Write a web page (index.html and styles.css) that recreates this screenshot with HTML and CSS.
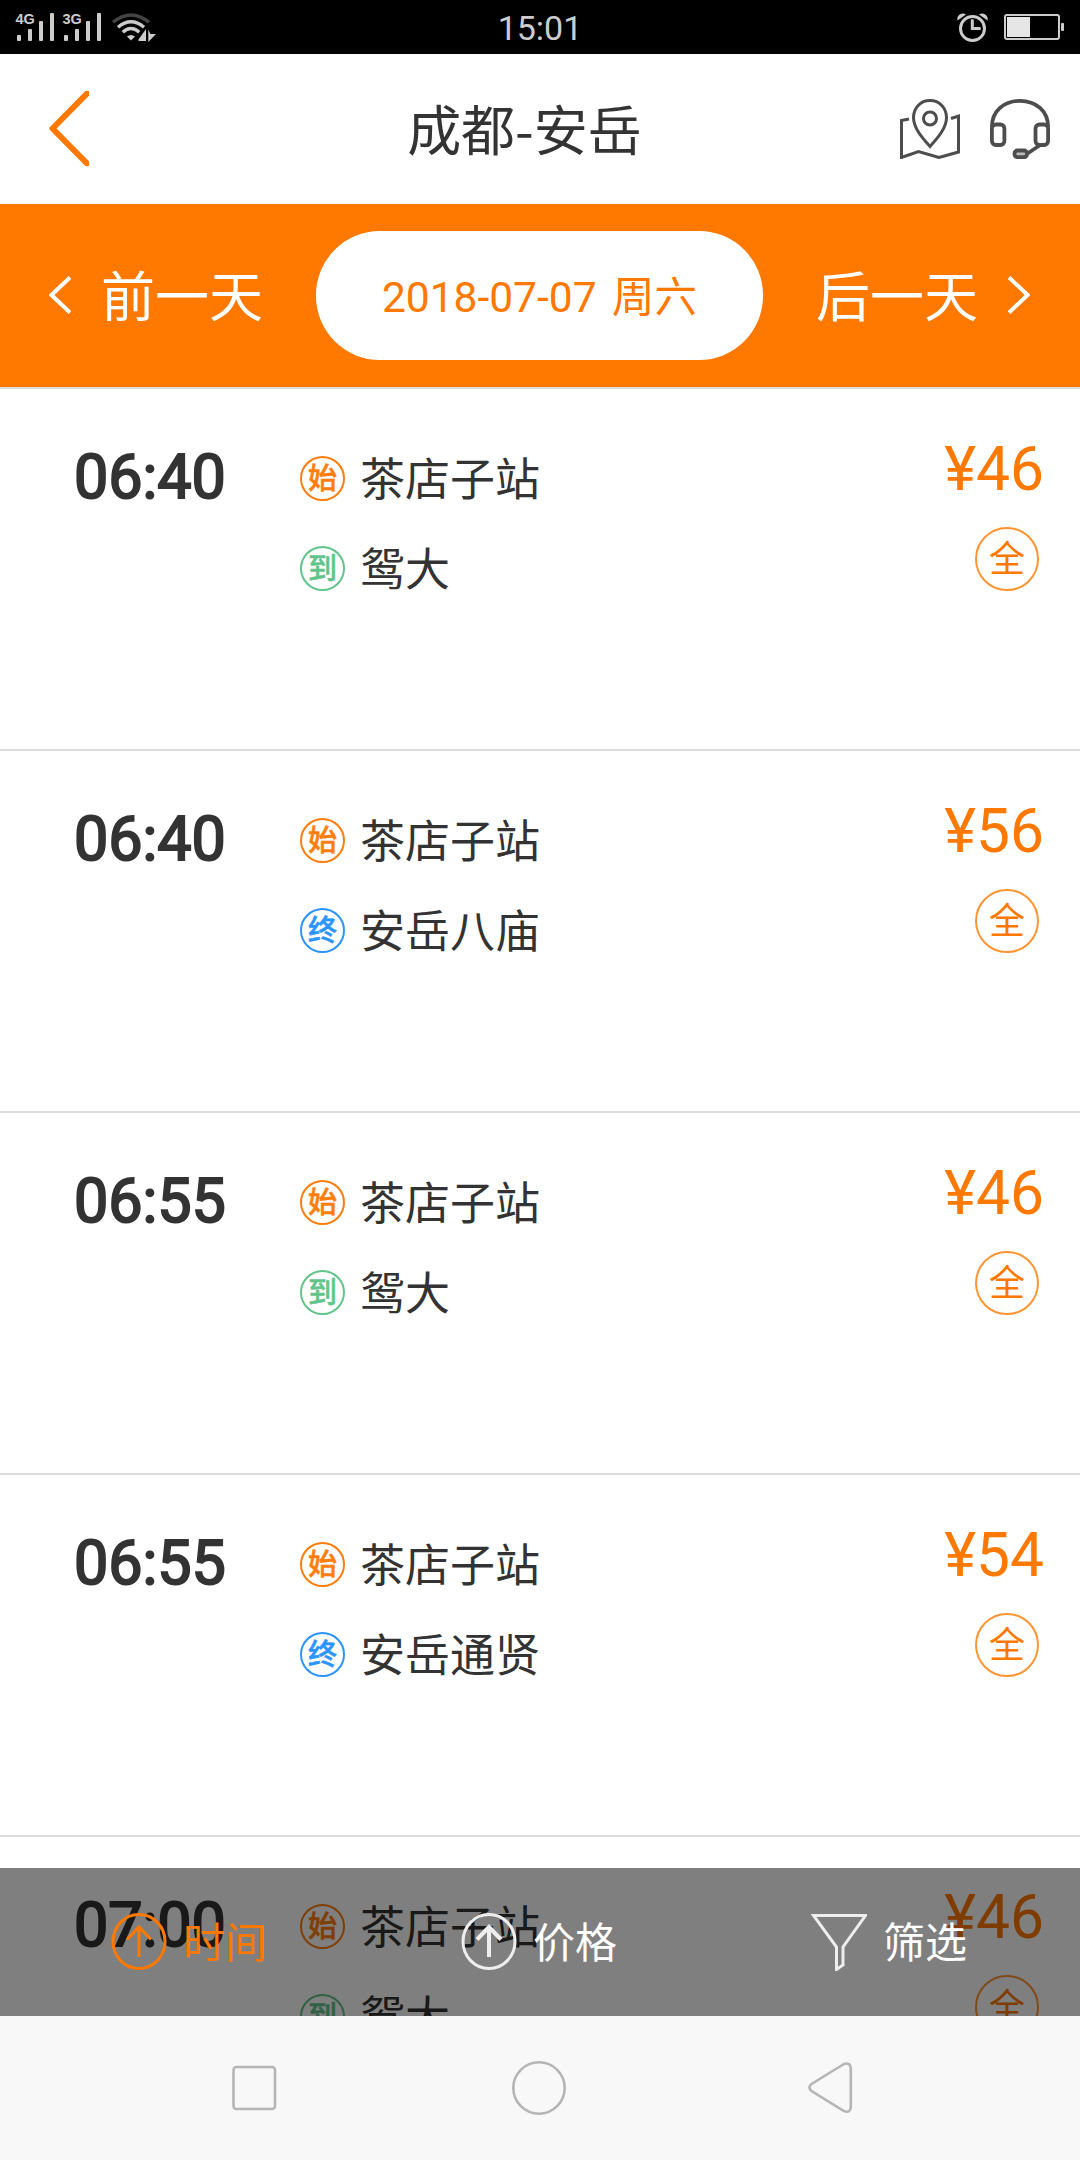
FILE: index.html
```html
<!DOCTYPE html>
<html lang="zh-CN">
<head>
    <meta charset="UTF-8">
    <meta name="viewport" content="width=device-width, initial-scale=1.0">
    <title>成都-安岳</title>
    <link rel="stylesheet" href="styles.css">
</head>
<body>
    <div class="status-bar">
        <svg class="signal" width="156" height="54" viewBox="0 0 156 54">
            <g fill="#ccc">
                <text x="15.5" y="24" class="net">4G</text>
                <rect x="17" y="35" width="4" height="6" rx="1"/>
                <rect x="28" y="29" width="4" height="12" rx="1"/>
                <rect x="39" y="21" width="4" height="20" rx="1"/>
                <rect x="50" y="13" width="4" height="28" rx="1"/>
                <text x="62.5" y="24" class="net">3G</text>
                <rect x="64" y="35" width="4" height="6" rx="1"/>
                <rect x="75" y="29" width="4" height="12" rx="1"/>
                <rect x="86" y="21" width="4" height="20" rx="1"/>
                <rect x="97" y="13" width="4" height="28" rx="1"/>
                <path d="M131 40.500L127 36.500Q131 33.500 135 36.500Z"/>
                <path d="M146 29V41H138.500V39.500ZM148.300 29.500L150.500 34H156L148.300 42Z"/>
            </g>
            <g fill="none" stroke-width="3.400">
                <path stroke="#444" d="M113 22.300Q131 7.500 149 22.300"/>
                <path stroke="#ccc" d="M118 27.300Q131 16.300 144 27.300"/>
                <path stroke="#ccc" d="M122.800 32.200Q131 25 139.200 32.200"/>
            </g>
        </svg>
        <span class="clock">15:01</span>
        <svg class="power" width="124" height="54" viewBox="956 0 124 54">
            <g fill="none" stroke="#ccc" stroke-width="3">
                <circle cx="972.500" cy="28.500" r="12"/>
                <path d="M972.300 20.500V28.500H979.500" stroke-linecap="round"/>
                <rect x="1005" y="15" width="54" height="24" rx="2" stroke-width="2"/>
            </g>
            <path fill="#ccc" d="M957.500 20.500A5.600 5.600 0 0 1 966 14.500ZM979 14.500A5.600 5.600 0 0 1 987.500 20.500Z"/>
            <rect x="1007" y="17" width="23" height="20" fill="#e6e6e6"/>
            <rect x="1061" y="23" width="3" height="8" rx="1" fill="#ccc"/>
        </svg>
    </div>

    <div class="header">
        <svg class="back" width="40" height="75" viewBox="0 0 40 75">
            <path d="M38 2.500L3.500 37.500L38 72.500" fill="none" stroke="#ff7800" stroke-width="6" stroke-linejoin="round" stroke-linecap="round"/>
        </svg>
        <h1>成都-安岳</h1>
        <div class="tools">
            <svg width="60" height="60" viewBox="0 0 60 60" fill="none" stroke="#4d4d4d" stroke-width="3">
                <path d="M30 1.500C20.500 1.500 13.500 9 13.500 18.500C13.500 29 22 38.500 30 47.500C38 38.500 46.500 29 46.500 18.500C46.500 9 39.500 1.500 30 1.500Z"/>
                <circle cx="30" cy="19.500" r="6.500"/>
                <path d="M9 20L1.500 21.500V58.500L18.500 52.500L39 58.500L58.500 53V17L51 19.500"/>
            </svg>
            <svg width="60" height="60" viewBox="0 0 60 60" fill="none" stroke="#4d4d4d" stroke-width="3.800">
                <path d="M1.900 28C1.900 12 14 1.900 30 1.900S58.100 12 58.100 28"/>
                <rect x="1.900" y="25.500" width="12.500" height="20.500" rx="4"/>
                <rect x="45.500" y="25.500" width="12.600" height="20.500" rx="4"/>
                <path d="M49.500 46.500L37.500 54.500"/>
                <rect x="24.500" y="51.500" width="12.500" height="6.700" rx="3" fill="#bbb"/>
            </svg>
        </div>
    </div>

    <div class="date-bar">
        <div class="day">
            <svg width="22" height="38" viewBox="0 0 22 38">
                <path d="M21 1.500L2.500 19L21 36.500" fill="none" stroke="#fff" stroke-width="4"/>
            </svg>
            <span>前一天</span>
        </div>
        <div class="date">2018-07-07 周六</div>
        <div class="day">
            <span>后一天</span>
            <svg width="22" height="38" viewBox="0 0 22 38">
                <path d="M1 1.500L19.500 19L1 36.500" fill="none" stroke="#fff" stroke-width="4"/>
            </svg>
        </div>
    </div>

    <div class="main">
        <div class="list" id="list">
            <!-- 班次列表 -->
        </div>
        <div class="filter-bar">
            <div class="filter active">
                <svg width="56" height="58" viewBox="0 0 56 58" fill="none" stroke="currentColor" stroke-width="3">
                    <ellipse cx="28" cy="28.500" rx="26" ry="27"/>
                    <path d="M28 44V14M16 26.500L28 14L40 26.500"/>
                </svg>
                <span>时间</span>
            </div>
            <div class="filter">
                <svg width="56" height="58" viewBox="0 0 56 58" fill="none" stroke="#eee" stroke-width="3">
                    <ellipse cx="28" cy="28.500" rx="26" ry="27"/>
                    <path d="M28 44V14M16 26.500L28 14L40 26.500" stroke-width="4"/>
                </svg>
                <span>价格</span>
            </div>
            <div class="filter">
                <svg width="56" height="58" viewBox="0 0 56 58" fill="none" stroke="#eee" stroke-width="3">
                    <path d="M2.500 2.500H54.500L32 34V52L25.500 56.500V34Z"/>
                </svg>
                <span>筛选</span>
            </div>
        </div>
    </div>

    <div class="nav-bar">
        <svg width="56" height="56" viewBox="0 0 56 56">
            <rect x="7.500" y="7" width="41.500" height="42" rx="3"/>
        </svg>
        <svg width="56" height="56" viewBox="0 0 56 56">
            <circle cx="28" cy="28" r="25.700"/>
        </svg>
        <svg width="58" height="56" viewBox="0 0 58 56">
            <path d="M48 4L15.500 24Q11.300 27.500 15.500 31L48 51Q54.500 53.500 54.800 47V8.500Q54.500 2 48 4Z"/>
        </svg>
    </div>

    <script>
        const data = [
            { time: "06:40", from: "茶店子站", type: "到", to: "鸳大", price: 46 },
            { time: "06:40", from: "茶店子站", type: "终", to: "安岳八庙", price: 56 },
            { time: "06:55", from: "茶店子站", type: "到", to: "鸳大", price: 46 },
            { time: "06:55", from: "茶店子站", type: "终", to: "安岳通贤", price: 54 },
            { time: "07:00", from: "茶店子站", type: "到", to: "鸳大", price: 46 }
        ];

        // 到 = 途经站, 终 = 终点站
        const typeClass = { "到": "pass", "终": "end" };

        document.getElementById("list").innerHTML = data.map(row => `
            <div class="row">
                <div class="time">${row.time}</div>
                <div class="stops">
                    <div class="stop"><span class="badge start">始</span><span class="name">${row.from}</span></div>
                    <div class="stop"><span class="badge ${typeClass[row.type]}">${row.type}</span><span class="name">${row.to}</span></div>
                </div>
                <div class="fare">
                    <div class="price">¥${row.price}</div>
                    <span class="full">全</span>
                </div>
            </div>
        `).join("");
    </script>
</body>
</html>
```
FILE: styles.css
```css
* {
    box-sizing: border-box;
}

body {
    margin: 0;
    height: 2160px;
    display: flex;
    flex-direction: column;
    overflow: hidden;
    background-color: #fff;
    color: #333;
    font-family: Roboto, 'Noto Sans CJK SC', sans-serif;
}

svg {
    display: block;
    flex: none;
}

/* 状态栏 */
.status-bar {
    height: 54px;
    flex: none;
    display: grid;
    grid-template-columns: 1fr auto 1fr;
    background-color: #000;
}

.net {
    font: bold 14.5px 'Liberation Sans', sans-serif;
}

.clock {
    font-size: 34px;
    line-height: 56px;
    color: #ccc;
}

.power {
    justify-self: end;
}

/* 标题 */
.header {
    height: 150px;
    flex: none;
    display: grid;
    grid-template-columns: 1fr auto 1fr;
    align-items: center;
    padding: 0 30px 0 49px;
}

.back {
    margin-bottom: 1px;
}

h1 {
    margin: 0 50px 0 0;
    font-family: 'Noto Sans CJK SC', sans-serif;
    font-size: 54px;
    font-weight: normal;
    line-height: 147px;
    height: 150px;
}

.tools {
    display: flex;
    justify-content: flex-end;
    gap: 30px;
}

/* 日期切换 */
.date-bar {
    height: 185px;
    flex: none;
    display: flex;
    justify-content: space-between;
    align-items: center;
    padding: 0 50px 0 49px;
    background-color: #ff7800;
    border-bottom: 2px solid #ddd;
}

.day {
    display: flex;
    align-items: center;
    gap: 30px;
    color: #fff;
    font-size: 54px;
}

.day span {
    padding-bottom: 4px;
}

.day svg {
    margin-bottom: 1px;
}

.date {
    width: 447px;
    height: 129px;
    border-radius: 64px;
    background-color: #fff;
    color: #ff7800;
    font-size: 42.5px;
    line-height: 134px;
    word-spacing: 5px;
    text-align: center;
}

/* 班次列表 */
.main {
    position: relative;
    flex: 1;
    min-height: 0;
    overflow: hidden;
}

.row {
    height: 362px;
    display: flex;
    border-bottom: 2px solid #ddd;
}

.time {
    width: 300px;
    padding: 43px 0 0 74px;
    font-size: 61px;
    -webkit-text-stroke: 2px #333;
    line-height: 90px;
}

.stops {
    flex: 1;
    padding-top: 44px;
}

.stop {
    height: 90px;
    display: flex;
    align-items: center;
    gap: 15px;
}

.name {
    padding-bottom: 4px;
    font-size: 45px;
}

.badge {
    width: 45px;
    height: 45px;
    border: 2px solid;
    border-radius: 50%;
    font-size: 29px;
    font-weight: 500;
    -webkit-text-stroke: 0.5px;
    line-height: 42px;
    text-align: center;
}

.start {
    color: #ff7d0c;
}

.pass {
    color: #62c48a;
}

.end {
    color: #2a94ff;
}

.fare {
    display: flex;
    flex-direction: column;
    align-items: flex-end;
    padding: 46px 36px 0 0;
    color: #ff7800;
}

.price {
    font-size: 60.5px;
    line-height: 70px;
}

.full {
    width: 64px;
    height: 64px;
    margin: 22px 5px 0 0;
    border: 2.5px solid #ff9433;
    border-radius: 50%;
    font-size: 36px;
    line-height: 62px;
    text-align: center;
}

/* 底部筛选, 盖在列表上面 */
.filter-bar {
    position: absolute;
    left: 0;
    right: 0;
    bottom: 0;
    height: 148px;
    display: flex;
    padding: 0 16px 0 14px;
    background-color: rgba(0, 0, 0, 0.5);
    color: #fff;
    font-size: 42px;
}

.filter {
    flex: 1;
    display: flex;
    justify-content: center;
    align-items: center;
    gap: 16px;
}

.filter span {
    padding-bottom: 5px;
}

.active {
    color: #ff7800;
}

/* 系统导航 */
.nav-bar {
    height: 144px;
    flex: none;
    display: flex;
    justify-content: center;
    align-items: center;
    gap: 229px;
    background-color: #f8f8f8;
}

.nav-bar svg {
    fill: none;
    stroke: #b5b5b5;
    stroke-width: 2.6;
}
```
